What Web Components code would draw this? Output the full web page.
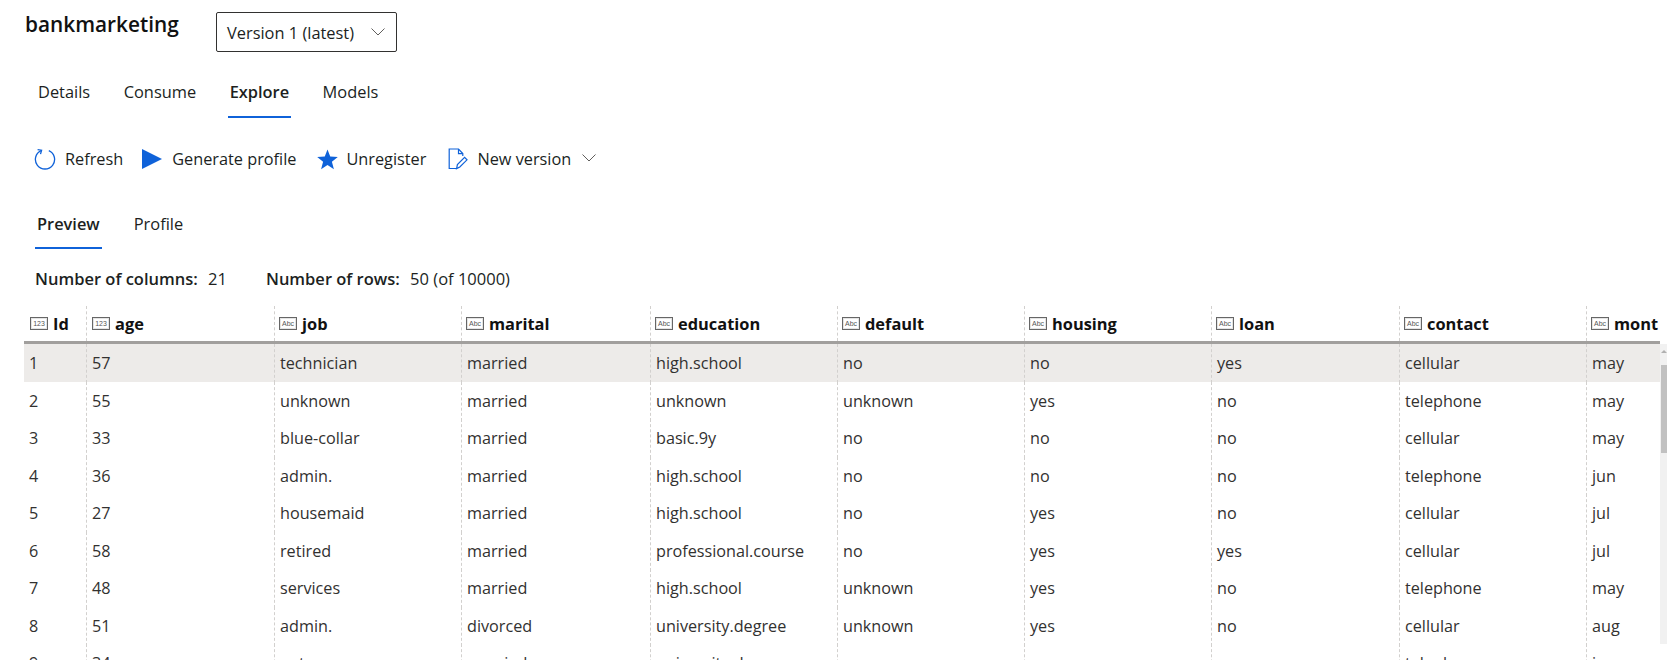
<!doctype html>
<html>
<head>
<meta charset="utf-8">
<style>
  html, body { margin: 0; height: 660px; overflow: hidden; background: #fff; }
  body { font-family: "Open Sans", "Noto Sans", sans-serif; color: #201f1e; }
</style>
</head>
<body>
<dataset-page></dataset-page>

<script>
const blue = '#0f62d9'

const icons = {
  refresh: `<svg width="22" height="22" viewBox="0 0 22 22" fill="none"><path d="M7.2 2.6A9.6 9.6 0 1 0 14.8 2.6" stroke="${blue}" stroke-width="1.3"/><path d="M6.5 6.2 7.6 2.2 3.6 1.6" stroke="${blue}" stroke-width="1.3"/></svg>`,
  play: `<svg width="20" height="20" viewBox="0 0 20 20"><path d="M0 0 20 10 0 20Z" fill="${blue}"/></svg>`,
  star: `<svg width="21" height="21" viewBox="0 0 20 20"><path d="M10 .5 12.6 7.2 19.8 7.6 14.2 12.2 16.1 19.2 10 15.3 3.9 19.2 5.8 12.2.2 7.6 7.4 7.2Z" fill="${blue}"/></svg>`,
  doc: `<svg width="20" height="22" viewBox="0 0 20 22" fill="none" stroke="${blue}" stroke-width="1.2"><path d="M8 20.5H1.2V1H10.5L14.8 5.6V8"/><path d="M10.5 1V5.6H14.8"/><path d="M8.6 20.6 9.4 16.6 16.6 9.4 19 11.8 11.8 19Z"/></svg>`,
  chevron: `<svg width="14" height="8" viewBox="0 0 14 8" fill="none" stroke="#605e5c" stroke-width="1"><path d="M.5.5 7 7 13.5.5"/></svg>`
}

customElements.define('page-title', class extends HTMLElement {
  constructor() {
    super()
    this.attachShadow({ mode: 'open' })
    this.shadowRoot.innerHTML = `
      <style>
        :host { display: flex; align-items: flex-start; padding: 12px 0 0 25px; height: 40px; }
        h1 { margin: 0; width: 191px; font-size: 20.8px; line-height: 25px; font-weight: 600; color: #111; }
        .select { box-sizing: border-box; width: 181px; height: 40px; border: 1px solid #323130; border-radius: 2px;
          display: flex; align-items: center; justify-content: space-between; padding: 0 11px 0 10px; font-size: 16.4px; }
      </style>
      <h1><slot></slot></h1>
      <div class="select"><span>Version 1 (latest)</span>${icons.chevron}</div>
    `
  }
})

customElements.define('tab-bar', class extends HTMLElement {
  constructor() {
    super()
    this.attachShadow({ mode: 'open' })
    this.shadowRoot.innerHTML = `
      <style>
        :host { display: flex; gap: var(--tab-gap, 29.5px); font-size: 16.4px; }
        ::slotted(*) { display: block; padding: 0 2px; height: var(--tab-height, 41px); line-height: var(--tab-line, 30px); box-sizing: border-box; }
        ::slotted(.on) { font-weight: 600; border-bottom: 2px solid ${blue}; }
      </style>
      <slot></slot>
    `
  }
})

customElements.define('command-bar', class extends HTMLElement {
  constructor() {
    super()
    this.attachShadow({ mode: 'open' })
    const items = [
      ['refresh', 'Refresh', 9, 0],
      ['play', 'Generate profile', 10, 0],
      ['star', 'Unregister', 8, 2],
      ['doc', 'New version', 9, 3]
    ]
    this.shadowRoot.innerHTML = `
      <style>
        :host { display: flex; align-items: center; gap: 19px; font-size: 16.3px; height: 30px; padding-left: 34px; }
        div { display: flex; align-items: center; }
        svg { display: block; flex: none; }
      </style>
      ${items.map(([icon, label, gap, before]) => `<div style="margin-left:${before}px"><span style="margin-right:${gap}px;display:flex">${icons[icon]}</span><span>${label}</span></div>`).join('')}
      <span style="margin:-3px 0 0 -8px">${icons.chevron}</span>
    `
  }
})

customElements.define('type-tag', class extends HTMLElement {
  constructor() {
    super()
    this.attachShadow({ mode: 'open' })
    this.shadowRoot.innerHTML = `
      <style>
        :host { display: inline-block; box-sizing: border-box; width: 18px; height: 13px; border: 1px solid #666; box-shadow: inset 0 0 0 1px #e4e4e4;
          font: 7px/11px "Liberation Sans", sans-serif; color: #555; text-align: center; margin-right: 5px; flex: none; overflow: hidden; }
      </style>
      <slot></slot>
    `
  }
})

const columns = [
  ['Id', '123'], ['age', '123'], ['job', 'Abc'], ['marital', 'Abc'], ['education', 'Abc'],
  ['default', 'Abc'], ['housing', 'Abc'], ['loan', 'Abc'], ['contact', 'Abc'], ['mont', 'Abc']
]

const rows = [
  ['1','57','technician','married','high.school','no','no','yes','cellular','may'],
  ['2','55','unknown','married','unknown','unknown','yes','no','telephone','may'],
  ['3','33','blue-collar','married','basic.9y','no','no','no','cellular','may'],
  ['4','36','admin.','married','high.school','no','no','no','telephone','jun'],
  ['5','27','housemaid','married','high.school','no','yes','no','cellular','jul'],
  ['6','58','retired','married','professional.course','no','yes','yes','cellular','jul'],
  ['7','48','services','married','high.school','unknown','yes','no','telephone','may'],
  ['8','51','admin.','divorced','university.degree','unknown','yes','no','cellular','aug'],
  ['9','34','entrepreneur','married','university.degree','no','yes','no','telephone','jun']
]

customElements.define('data-table', class extends HTMLElement {
  constructor() {
    super()
    this.attachShadow({ mode: 'open' })
    const cell = (text, i) => `<div class="c${i ? ' line' : ''}">${text}</div>`
    this.shadowRoot.innerHTML = `
      <style>
        :host { display: block; position: relative; margin-left: 24px; width: 1643px; --cols: 62px 188px 187px 189px 187px 187px 187px 188px 187px 74px; }
        .row { display: grid; grid-template-columns: var(--cols); width: 1636px; overflow: hidden; }
        .head { box-sizing: border-box; height: 38px; border-bottom: 3px solid #a19f9d; font-weight: 700; font-size: 16.4px; color: #111; }
        .head .c { display: flex; align-items: center; padding: 0 0 0 4px; white-space: nowrap; }
        .head .c:nth-child(1) { padding-left: 6px; }
        .head .c:nth-child(2) { padding-left: 5px; }
        .body .row { height: 37.5px; font-size: 16.2px; color: #323130; }
        .body .row:first-child { background: #edebe9; }
        .body .c { padding-left: 5px; line-height: 39px; white-space: nowrap; }
        .line { border-left: 1px dashed #d2d0ce; }
        .bar { position: absolute; left: 1636px; top: 38px; width: 7px; height: 300px; background: #f1f1f1; }
        .bar::before { content: ''; position: absolute; left: 1px; top: 6px; border: 3px solid transparent; border-top: 0; border-bottom: 3px solid #b0b0b0; }
        .bar::after { content: ''; position: absolute; left: 1px; top: 21px; width: 6px; height: 88px; background: #c1c1c1; }
      </style>
      <div class="row head">${columns.map(([name, kind], i) => `<div class="c${i ? ' line' : ''}"><type-tag>${kind}</type-tag>${name}</div>`).join('')}</div>
      <div class="body">${rows.map(r => `<div class="row">${r.map(cell).join('')}</div>`).join('')}</div>
      <div class="bar"></div>
    `
  }
})

customElements.define('dataset-page', class extends HTMLElement {
  constructor() {
    super()
    this.attachShadow({ mode: 'open' })
    this.shadowRoot.innerHTML = `
      <style>
        :host { display: block; height: 660px; overflow: hidden; }
        tab-bar.top { margin: 25px 0 0 36px; }
        command-bar { margin-top: 26px; }
        tab-bar.sub { margin: 38px 0 0 35px; --tab-height: 37px; --tab-line: 24px; --tab-gap: 30px; }
        .stats { display: flex; gap: 39px; margin: 19px 0 0 35px; height: 22px; font-size: 16.5px; line-height: 22px; }
        .stats b { font-weight: 600; margin-right: 6px; }
        data-table { margin-top: 16px; }
      </style>
      <page-title>bankmarketing</page-title>
      <tab-bar class="top"><span>Details</span><span>Consume</span><span class="on">Explore</span><span>Models</span></tab-bar>
      <command-bar></command-bar>
      <tab-bar class="sub"><span class="on">Preview</span><span>Profile</span></tab-bar>
      <div class="stats"><span><b>Number of columns:</b> 21</span><span><b>Number of rows:</b> 50 (of 10000)</span></div>
      <data-table></data-table>
    `
  }
})
</script>
</body>
</html>
